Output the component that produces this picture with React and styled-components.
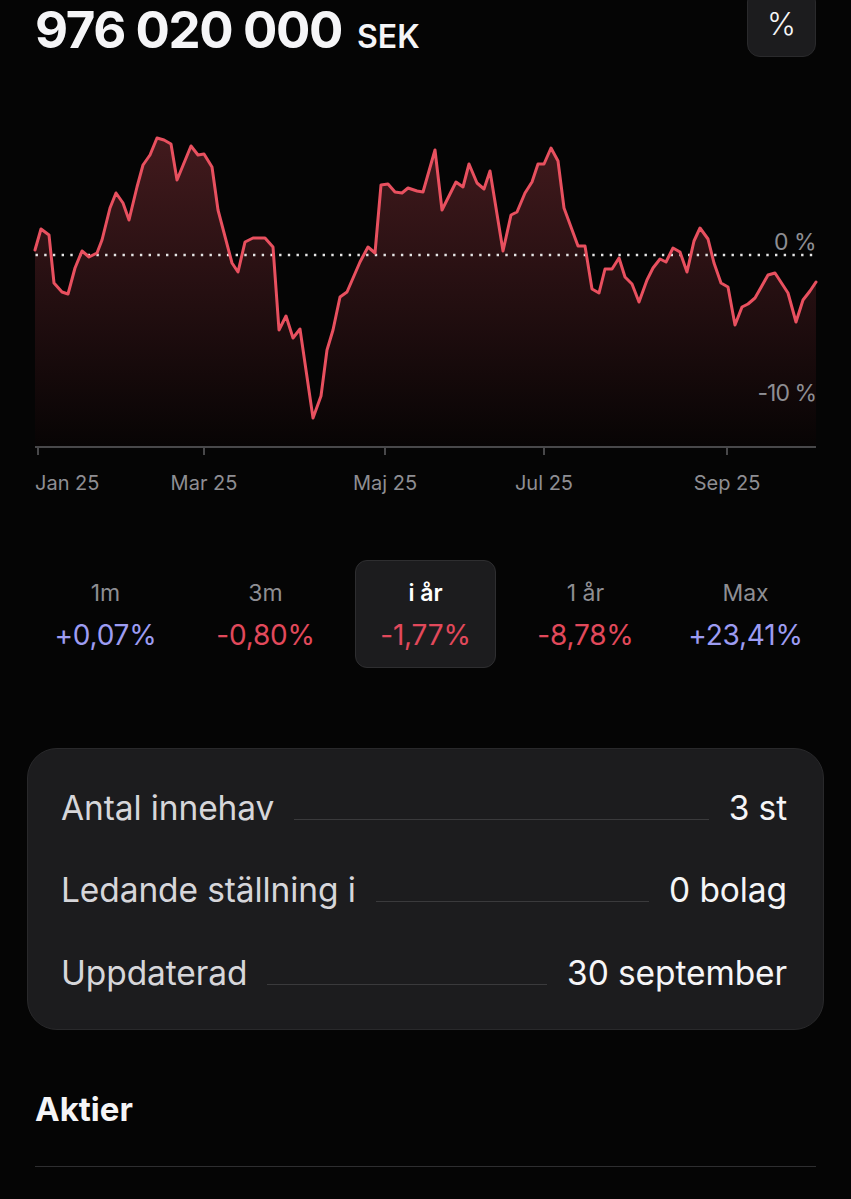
import React from "react";
import styled, { createGlobalStyle } from "styled-components";

const GlobalStyle = createGlobalStyle`
  html, body {
    margin: 0;
    padding: 0;
    background: #050505;
  }
  body {
    font-family: Inter, "Noto Sans", "Liberation Sans", sans-serif;
    color: #f2f2f7;
    -webkit-font-smoothing: antialiased;
  }
`;

const Page = styled.div`
  width: 851px;
  min-height: 1199px;
  box-sizing: border-box;
  padding: 0 35px;
  background: #050505;
  overflow: hidden;
`;

const Header = styled.header`
  display: flex;
  justify-content: space-between;
  align-items: flex-start;
  height: 58px;
`;

const Amount = styled.h1`
  margin: 0;
  padding-top: 2px;
  display: flex;
  align-items: baseline;
  gap: 15px;
  font-size: 51px;
  line-height: 56px;
  font-weight: 700;
  letter-spacing: -1.4px;
  color: #f5f5f7;
`;

const Currency = styled.span`
  font-size: 32px;
  font-weight: 600;
  letter-spacing: 0;
`;

const ToggleButton = styled.button`
  margin-top: -11px;
  width: 69px;
  height: 68px;
  border-radius: 13px;
  border: 1px solid #2a2a2c;
  background: #1c1c1e;
  color: #f5f5f7;
  font-family: inherit;
  font-size: 31px;
  font-weight: 300;
  padding: 0;
  display: flex;
  align-items: center;
  justify-content: center;
`;

const ChartSvg = styled.svg`
  display: block;
  margin-top: 22px;
  width: 781px;
  height: 430px;
  overflow: visible;
`;

const Periods = styled.div`
  margin-top: 50px;
  display: grid;
  grid-template-columns: repeat(5, 141px);
  column-gap: 19px;
`;

const PeriodTab = styled.div`
  height: 108px;
  box-sizing: border-box;
  border-radius: 12px;
  border: 1px solid ${(p) => (p.$active ? "#2e2e30" : "transparent")};
  background: ${(p) => (p.$active ? "#1c1c1e" : "transparent")};
  display: flex;
  flex-direction: column;
  align-items: center;
  justify-content: center;
  gap: 12px;
  padding-top: 2px;
`;

const PeriodLabel = styled.span`
  font-size: 23px;
  line-height: 28px;
  font-weight: ${(p) => (p.$active ? 600 : 400)};
  color: ${(p) => (p.$active ? "#ffffff" : "#8e8e93")};
`;

const PeriodValue = styled.span`
  font-size: 28px;
  line-height: 32px;
  font-weight: 400;
  letter-spacing: -0.2px;
  color: ${(p) => (p.$tone === "up" ? "#9d9cf2" : "#e2495b")};
`;

const InfoCard = styled.section`
  margin: 80px -8px 0;
  height: 282px;
  box-sizing: border-box;
  padding: 18px 36px 15px 33px;
  border-radius: 30px;
  background: #1c1c1e;
  border: 1px solid #29292b;
  display: flex;
  flex-direction: column;
`;

const InfoRow = styled.div`
  height: 83px;
  display: flex;
  align-items: center;
`;

const InfoInner = styled.div`
  flex: 1;
  display: flex;
  align-items: baseline;
  gap: 20px;
  font-size: 33.5px;
  line-height: 40px;
  letter-spacing: -0.1px;
`;

const InfoLabel = styled.span`
  color: #d6d6da;
  white-space: nowrap;
`;

const Leader = styled.span`
  flex: 1;
  height: 1px;
  background: #3a3a3c;
`;

const InfoValue = styled.span`
  color: #f5f5f7;
  white-space: nowrap;
`;

const SectionTitle = styled.h2`
  margin: 59px 0 0;
  font-size: 33px;
  line-height: 40px;
  font-weight: 700;
  color: #f5f5f7;
`;

const Divider = styled.hr`
  margin: 37px 0 0;
  border: none;
  height: 1px;
  background: #2e2e30;
`;

const RAW = [
  [35,250],[41,229],[49,235],[54,283],[62,292],[68,294],[75,268],[82,251],[89,257],[97,253],
  [102,240],[110,208],[116,193],[123,203],[129,220],[137,187],[143,165],[150,155],[157,138],[164,140],
  [171,144],[177,180],[191,146],[198,155],[204,154],[212,167],[218,210],[232,263],[238,272],[245,242],
  [253,238],[265,238],[273,247],[279,330],[286,316],[293,338],[300,329],[313,418],[321,396],[327,350],
  [333,330],[340,297],[347,292],[360,262],[368,247],[375,253],[381,185],[388,184],[395,192],[402,193],
  [408,188],[417,191],[423,192],[435,150],[442,210],[456,182],[463,187],[469,164],[477,183],[484,189],
  [490,171],[503,251],[511,215],[517,212],[525,193],[532,182],[538,164],[544,164],[551,148],[558,161],
  [564,208],[578,246],[585,246],[592,289],[599,293],[605,269],[612,269],[619,258],[625,277],[632,284],
  [639,302],[647,280],[653,268],[660,259],[666,262],[673,248],[680,252],[687,272],[694,241],[700,228],
  [708,239],[714,263],[721,283],[728,287],[735,325],[742,307],[748,304],[755,298],[768,275],[775,273],
  [788,293],[796,322],[803,300],[810,291],[816,282],
];

const PTS = RAW.map(([x, y]) => [x - 35, y - 80]);
const AXIS_Y = 367;
const linePath = PTS.map(([x, y], i) => `${i ? "L" : "M"}${x} ${y}`).join(" ");
const areaPath = `${linePath} L781 ${AXIS_Y} L0 ${AXIS_Y} Z`;

const MONTHS = [
  { label: "Jan 25", x: 3, anchor: "start", tx: 0 },
  { label: "Mar 25", x: 169 },
  { label: "Maj 25", x: 350 },
  { label: "Jul 25", x: 509 },
  { label: "Sep 25", x: 692 },
];

const axisText = {
  fontFamily: 'Inter, "Liberation Sans", sans-serif',
  fill: "#8e8e93",
};

function Chart() {
  return (
    <ChartSvg viewBox="0 0 781 430">
      <defs>
        <linearGradient id="areaFill" x1="0" y1="58" x2="0" y2={AXIS_Y} gradientUnits="userSpaceOnUse">
          <stop offset="0" stopColor="#421a1d" />
          <stop offset="0.5" stopColor="#250f11" />
          <stop offset="1" stopColor="#070404" />
        </linearGradient>
      </defs>
      <path d={areaPath} fill="url(#areaFill)" />
      <line x1="0.5" y1="175" x2="781" y2="175" stroke="#e6e6e6" strokeWidth="2.4" strokeDasharray="2.4 6.3" />
      <path d={linePath} fill="none" stroke="#e8505f" strokeWidth="3" strokeLinejoin="round" strokeLinecap="round" />
      <text x="781" y="170" textAnchor="end" fontSize="23" letterSpacing="-0.5" style={axisText}>0 %</text>
      <text x="781" y="321" textAnchor="end" fontSize="23" letterSpacing="-1" style={axisText}>-10 %</text>
      <line x1="0" y1={AXIS_Y} x2="781" y2={AXIS_Y} stroke="#48484a" strokeWidth="2" />
      {MONTHS.map((m) => (
        <g key={m.label}>
          <line x1={m.x} y1={AXIS_Y} x2={m.x} y2={AXIS_Y + 8} stroke="#48484a" strokeWidth="2" />
          <text
            x={m.tx !== undefined ? m.tx : m.x}
            y="410"
            textAnchor={m.anchor || "middle"}
            fontSize="20"
            style={axisText}
          >
            {m.label}
          </text>
        </g>
      ))}
    </ChartSvg>
  );
}

const PERIODS = [
  { label: "1m", value: "+0,07%", tone: "up" },
  { label: "3m", value: "-0,80%", tone: "down" },
  { label: "i år", value: "-1,77%", tone: "down", active: true },
  { label: "1 år", value: "-8,78%", tone: "down" },
  { label: "Max", value: "+23,41%", tone: "up" },
];

const INFO = [
  { label: "Antal innehav", value: "3 st" },
  { label: "Ledande ställning i", value: "0 bolag" },
  { label: "Uppdaterad", value: "30 september" },
];

export default function App() {
  return (
    <>
      <GlobalStyle />
      <Page>
        <Header>
          <Amount>
            976 020 000<Currency>SEK</Currency>
          </Amount>
          <ToggleButton>%</ToggleButton>
        </Header>
        <Chart />
        <Periods>
          {PERIODS.map((p) => (
            <PeriodTab key={p.label} $active={p.active}>
              <PeriodLabel $active={p.active}>{p.label}</PeriodLabel>
              <PeriodValue $tone={p.tone}>{p.value}</PeriodValue>
            </PeriodTab>
          ))}
        </Periods>
        <InfoCard>
          {INFO.map((r) => (
            <InfoRow key={r.label}>
              <InfoInner>
                <InfoLabel>{r.label}</InfoLabel>
                <Leader />
                <InfoValue>{r.value}</InfoValue>
              </InfoInner>
            </InfoRow>
          ))}
        </InfoCard>
        <SectionTitle>Aktier</SectionTitle>
        <Divider />
      </Page>
    </>
  );
}
